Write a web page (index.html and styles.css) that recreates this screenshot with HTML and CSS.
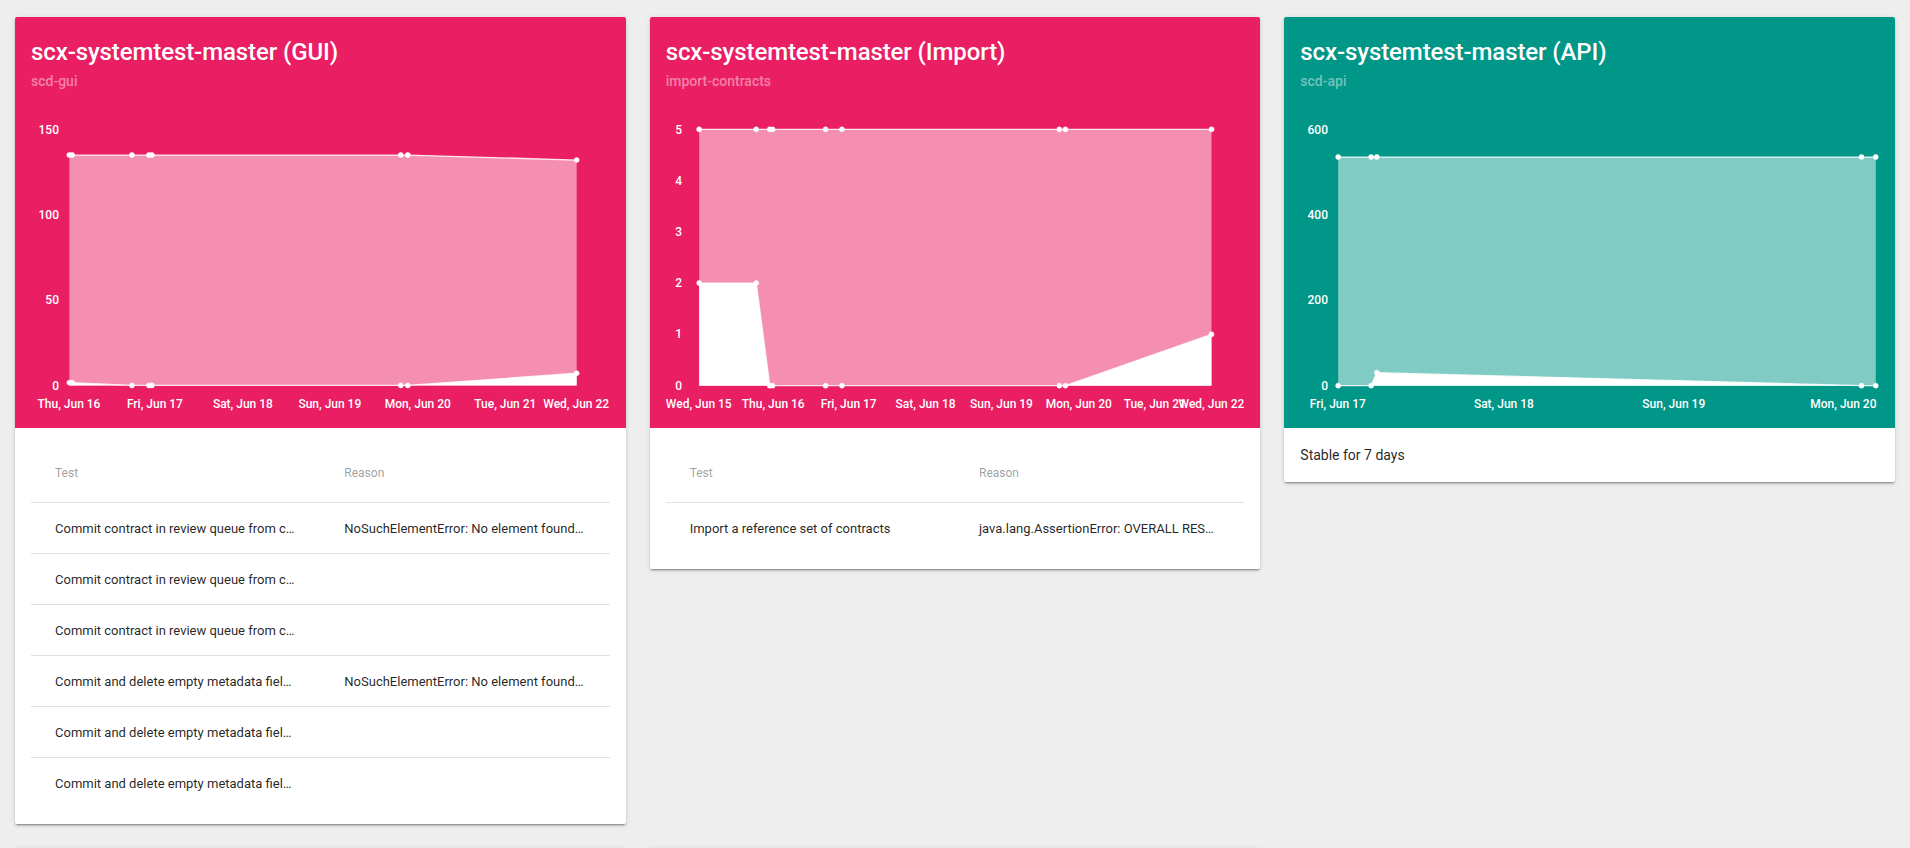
FILE: index.html
```html
<!DOCTYPE html>
<html lang="en">
<head>
<meta charset="utf-8">
<title>System tests</title>
<link rel="stylesheet" href="styles.css">
</head>
<body>
<main class="board">

  <article class="card">
    <header class="card-head card-head--pink">
      <div class="titles">
        <h2 class="title">scx-systemtest-master (GUI)</h2>
        <div class="subtitle">scd-gui</div>
      </div>
      <svg class="chart" width="611" height="339" viewBox="0 0 611 339">
        <g class="ylabels">
          <text x="44" y="45.3">150</text>
          <text x="44" y="130.3">100</text>
          <text x="44" y="215.3">50</text>
          <text x="44" y="301">0</text>
        </g>
        <polygon class="area-a" points="54.4,296.5 54.4,66 57.2,66 117,66 134,66 137,66 386,66 393,66 562,71 562,296.5"/>
        <polygon class="area-b" points="54.4,296.5 54.4,293.7 57.2,293.7 117,296.5 134,296.5 137,296.5 386,296.5 393,296.5 562,284.3 562,296.5"/>
        <polyline class="line-a" points="54.4,66 57.2,66 117,66 134,66 137,66 386,66 393,66 562,71"/>
        <polyline class="line-b" points="54.4,293.7 57.2,293.7 117,296.5 134,296.5 137,296.5 386,296.5 393,296.5 562,284.3"/>
        <g class="pts">
          <circle cx="54.4" cy="66" r="2.5"/><circle cx="57.2" cy="66" r="2.5"/><circle cx="117" cy="66" r="2.5"/><circle cx="134" cy="66" r="2.5"/><circle cx="137" cy="66" r="2.5"/><circle cx="386" cy="66" r="2.5"/><circle cx="393" cy="66" r="2.5"/><circle cx="562" cy="71" r="2.5"/>
          <circle cx="54.4" cy="293.7" r="2.5"/><circle cx="57.2" cy="293.7" r="2.5"/><circle cx="117" cy="296.5" r="2.5"/><circle cx="134" cy="296.5" r="2.5"/><circle cx="137" cy="296.5" r="2.5"/><circle cx="386" cy="296.5" r="2.5"/><circle cx="393" cy="296.5" r="2.5"/><circle cx="562" cy="284.3" r="2.5"/>
        </g>
        <g class="xlabels">
          <text x="54" y="319.3">Thu, Jun 16</text>
          <text x="140" y="319.3">Fri, Jun 17</text>
          <text x="228" y="319.3">Sat, Jun 18</text>
          <text x="315" y="319.3">Sun, Jun 19</text>
          <text x="403" y="319.3">Mon, Jun 20</text>
          <text x="490.6" y="319.3">Tue, Jun 21</text>
          <text x="561.5" y="319.3">Wed, Jun 22</text>
        </g>
      </svg>
    </header>
    <div class="card-body">
      <table class="tests">
        <thead>
          <tr><th>Test</th><th>Reason</th></tr>
        </thead>
        <tbody>
          <tr><td>Commit contract in review queue from contract view</td><td>NoSuchElementError: No element found using locator</td></tr>
          <tr><td>Commit contract in review queue from contract list</td><td></td></tr>
          <tr><td>Commit contract in review queue from contract search</td><td></td></tr>
          <tr><td>Commit and delete empty metadata fields from contract view</td><td>NoSuchElementError: No element found using locator</td></tr>
          <tr><td>Commit and delete empty metadata fields from contract list</td><td></td></tr>
          <tr><td>Commit and delete empty metadata fields from contract search</td><td></td></tr>
        </tbody>
      </table>
    </div>
  </article>

  <article class="card">
    <header class="card-head card-head--pink">
      <div class="titles">
        <h2 class="title">scx-systemtest-master (Import)</h2>
        <div class="subtitle">import-contracts</div>
      </div>
      <svg class="chart" width="611" height="339" viewBox="0 0 611 339">
        <g class="ylabels">
          <text x="32" y="44.6">5</text>
          <text x="32" y="96">4</text>
          <text x="32" y="147">3</text>
          <text x="32" y="198">2</text>
          <text x="32" y="248.6">1</text>
          <text x="32" y="301">0</text>
        </g>
        <polygon class="area-a" points="49.2,296.7 49.2,40.3 106.3,40.3 119.8,40.3 122.7,40.3 175.7,40.3 192,40.3 409.6,40.3 415.7,40.3 561.8,40.3 561.8,296.7"/>
        <polygon class="area-b" points="49.2,296.7 49.2,194.1 106.3,194.1 119.8,296.7 122.7,296.7 175.7,296.7 192,296.7 409.6,296.7 415.7,296.7 561.8,245.4 561.8,296.7"/>
        <polyline class="line-a" points="49.2,40.3 106.3,40.3 119.8,40.3 122.7,40.3 175.7,40.3 192,40.3 409.6,40.3 415.7,40.3 561.8,40.3"/>
        <polyline class="line-b" points="49.2,194.1 106.3,194.1 119.8,296.7 122.7,296.7 175.7,296.7 192,296.7 409.6,296.7 415.7,296.7 561.8,245.4"/>
        <g class="pts">
          <circle cx="49.2" cy="40.3" r="2.5"/><circle cx="106.3" cy="40.3" r="2.5"/><circle cx="119.8" cy="40.3" r="2.5"/><circle cx="122.7" cy="40.3" r="2.5"/><circle cx="175.7" cy="40.3" r="2.5"/><circle cx="192" cy="40.3" r="2.5"/><circle cx="409.6" cy="40.3" r="2.5"/><circle cx="415.7" cy="40.3" r="2.5"/><circle cx="561.8" cy="40.3" r="2.5"/>
          <circle cx="49.2" cy="194.1" r="2.5"/><circle cx="106.3" cy="194.1" r="2.5"/><circle cx="119.8" cy="296.7" r="2.5"/><circle cx="122.7" cy="296.7" r="2.5"/><circle cx="175.7" cy="296.7" r="2.5"/><circle cx="192" cy="296.7" r="2.5"/><circle cx="409.6" cy="296.7" r="2.5"/><circle cx="415.7" cy="296.7" r="2.5"/><circle cx="561.8" cy="245.4" r="2.5"/>
        </g>
        <g class="xlabels">
          <text x="48.8" y="319.3">Wed, Jun 15</text>
          <text x="123.3" y="319.3">Thu, Jun 16</text>
          <text x="198.8" y="319.3">Fri, Jun 17</text>
          <text x="275.7" y="319.3">Sat, Jun 18</text>
          <text x="351.7" y="319.3">Sun, Jun 19</text>
          <text x="429" y="319.3">Mon, Jun 20</text>
          <text x="505" y="319.3">Tue, Jun 21</text>
          <text x="561.8" y="319.3">Wed, Jun 22</text>
        </g>
      </svg>
    </header>
    <div class="card-body">
      <table class="tests">
        <thead>
          <tr><th>Test</th><th>Reason</th></tr>
        </thead>
        <tbody>
          <tr><td>Import a reference set of contracts</td><td>java.lang.AssertionError: OVERALL RESULT: FAILED</td></tr>
        </tbody>
      </table>
    </div>
  </article>

  <article class="card">
    <header class="card-head card-head--teal">
      <div class="titles">
        <h2 class="title">scx-systemtest-master (API)</h2>
        <div class="subtitle">scd-api</div>
      </div>
      <svg class="chart" width="611" height="339" viewBox="0 0 611 339">
        <g class="ylabels">
          <text x="44" y="45.3">600</text>
          <text x="44" y="130.3">400</text>
          <text x="44" y="215.3">200</text>
          <text x="44" y="301">0</text>
        </g>
        <polygon class="area-a" points="54.2,296.7 54.2,68 87.2,68 92.9,68 577.8,68 592.1,68 592.1,296.7"/>
        <polygon class="area-b" points="54.2,296.7 87.2,296.7 92.9,283.7 577.8,296.7 592.1,296.7"/>
        <polyline class="line-a" points="54.2,68 87.2,68 92.9,68 577.8,68 592.1,68"/>
        <polyline class="line-b" points="54.2,296.7 87.2,296.7 92.9,283.7 577.8,296.7 592.1,296.7"/>
        <g class="pts">
          <circle cx="54.2" cy="68" r="2.5"/><circle cx="87.2" cy="68" r="2.5"/><circle cx="92.9" cy="68" r="2.5"/><circle cx="577.8" cy="68" r="2.5"/><circle cx="592.1" cy="68" r="2.5"/>
          <circle cx="54.2" cy="296.7" r="2.5"/><circle cx="87.2" cy="296.7" r="2.5"/><circle cx="92.9" cy="283.7" r="2.5"/><circle cx="577.8" cy="296.7" r="2.5"/><circle cx="592.1" cy="296.7" r="2.5"/>
        </g>
        <g class="xlabels">
          <text x="53.8" y="319.3">Fri, Jun 17</text>
          <text x="220" y="319.3">Sat, Jun 18</text>
          <text x="390" y="319.3">Sun, Jun 19</text>
          <text x="559.7" y="319.3">Mon, Jun 20</text>
        </g>
      </svg>
    </header>
    <div class="card-body">
      <p class="stable">Stable for 7 days</p>
    </div>
  </article>

  <article class="card card--more"></article>
  <article class="card card--more"></article>

</main>
</body>
</html>
```

FILE: styles.css
```css
* {
  box-sizing: border-box;
}

html, body {
  margin: 0;
  padding: 0;
  background: #eeeeee;
}

body {
  font-family: Roboto, "Noto Sans", "Liberation Sans", sans-serif;
  color: rgba(0, 0, 0, 0.87);
}

.board {
  display: grid;
  grid-template-columns: repeat(3, 1fr);
  column-gap: 24px;
  row-gap: 24px;
  padding: 17px 15px;
  align-items: start;
}

.card {
  background: #ffffff;
  border-radius: 2px;
  overflow: hidden;
  box-shadow: 0 2px 2px 0 rgba(0, 0, 0, 0.14),
              0 3px 1px -2px rgba(0, 0, 0, 0.2),
              0 1px 5px 0 rgba(0, 0, 0, 0.12);
}

.card--more {
  height: 200px;
}

.card-head {
  color: #ffffff;
}

.card-head--pink {
  background: #e91e63;
}

.card-head--teal {
  background: #009688;
}

.titles {
  padding: 19px 16px 0;
}

.title {
  margin: 0;
  font-size: 24px;
  line-height: 32px;
  font-weight: 500;
  letter-spacing: -0.1px;
}

.subtitle {
  margin: 3px 0 -2px;
  font-size: 14px;
  line-height: 20px;
  font-weight: 500;
  color: rgba(255, 255, 255, 0.45);
}

.chart {
  display: block;
  width: 100%;
  height: 339px;
  overflow: visible;
}

.chart text {
  font-family: Roboto, "Noto Sans", sans-serif;
  font-size: 12px;
  font-weight: 500;
  fill: #ffffff;
}

.ylabels text {
  text-anchor: end;
}

.xlabels text {
  text-anchor: middle;
}

.area-a {
  fill: rgba(255, 255, 255, 0.5);
}

.area-b {
  fill: #ffffff;
}

.line-a,
.line-b {
  fill: none;
  stroke: rgba(255, 255, 255, 0.85);
  stroke-width: 1.3;
}

.pts circle {
  fill: #ffffff;
  stroke: #ffffff;
  stroke-width: 0.6;
}

.card-body {
  padding: 16px;
}

.tests {
  width: 100%;
  table-layout: fixed;
  border-collapse: separate;
  border-spacing: 0;
}

.tests th,
.tests td {
  padding: 0 24px;
  text-align: left;
  white-space: nowrap;
  overflow: hidden;
  text-overflow: ellipsis;
  vertical-align: middle;
}

.tests th {
  height: 58px;
  font-size: 12px;
  font-weight: 400;
  color: rgba(0, 0, 0, 0.4);
}

.tests td {
  height: 51px;
  border-top: 1px solid #e0e0e0;
  font-size: 13px;
  color: rgba(0, 0, 0, 0.87);
}

.stable {
  margin: 0;
  font-size: 14px;
  line-height: 22px;
  color: rgba(0, 0, 0, 0.87);
}
```
